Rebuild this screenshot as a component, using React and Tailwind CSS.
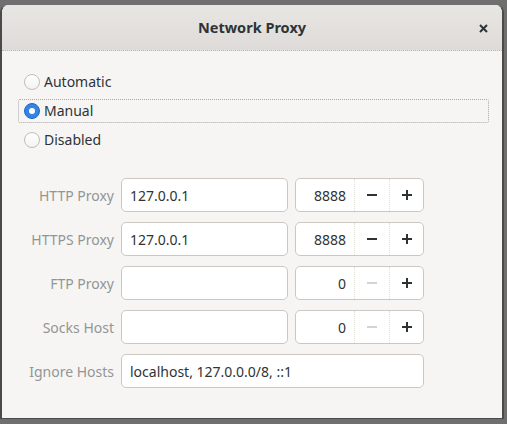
import React from "react";

const font = { fontFamily: '"Noto Sans", "Open Sans", sans-serif' };

function Radio({ label, checked, focused }) {
  return (
    <div
      className={
        "h-[24px] flex items-center pl-[5px] rounded-[2px] border border-dotted " +
        (focused ? "border-[#a8a8a6]" : "border-transparent")
      }
    >
      {checked ? (
        <span className="w-[16px] h-[16px] rounded-full bg-[#3584e4] border border-[#1b6acb] flex items-center justify-center">
          <span className="w-[6px] h-[6px] rounded-full bg-white" />
        </span>
      ) : (
        <span className="w-[16px] h-[16px] rounded-full bg-gradient-to-b from-white to-[#f4f3f2] border border-[#c0bdb9]" />
      )}
      <span className="ml-[4px] text-[14px] text-[#2e3436] leading-none">{label}</span>
    </div>
  );
}

function Entry({ value, className = "" }) {
  return (
    <div
      className={
        "h-[34px] bg-white border border-[#cdc7c2] rounded-[5px] flex items-center pl-[8px] text-[14px] text-[#2e3436] " +
        className
      }
    >
      {value}
    </div>
  );
}

function Spin({ value, minusDisabled }) {
  return (
    <div className="w-[129px] h-[34px] bg-white border border-[#cdc7c2] rounded-[5px] flex items-stretch text-[14px] text-[#2e3436]">
      <div className="w-[58px] flex items-center justify-end pr-[8px]">{value}</div>
      <div className="w-[35px] flex items-center justify-center border-l border-dotted border-[#e2dfdb]">
        <svg width="12" height="12" viewBox="0 0 12 12">
          <path d="M1 6h10" stroke={minusDisabled ? "#d5d3d0" : "#2e3436"} strokeWidth="2" />
        </svg>
      </div>
      <div className="flex-1 flex items-center justify-center border-l border-dotted border-[#e2dfdb]">
        <svg width="12" height="12" viewBox="0 0 12 12">
          <path d="M1 6h10M6 1v10" stroke="#2e3436" strokeWidth="2" />
        </svg>
      </div>
    </div>
  );
}

function Row({ label, children }) {
  return (
    <div className="flex items-center">
      <div className="w-[96px] text-right text-[14px] text-[#929595]">{label}</div>
      <div className="ml-[7px] flex items-center gap-[7px]">{children}</div>
    </div>
  );
}

export default function App() {
  return (
    <div
      className="w-[507px] h-[424px] bg-[#6f6f6f] pt-[5px] pb-[5px] pl-0 pr-[3px] overflow-hidden"
      style={font}
    >
      <div className="h-full flex flex-col bg-[#f6f5f4] border-x-[2px] border-b border-[#4a4a4a] rounded-t-[8px] overflow-hidden">
        <div className="h-[46px] shrink-0 bg-gradient-to-b from-[#e8e6e3] to-[#dedbd8] border-b border-dotted border-[#bfb8b1] flex items-center justify-center relative">
          <span className="text-[14.5px] font-bold text-[#2e3436]">Network Proxy</span>
          <span className="absolute right-[14px] top-[19px]">
            <svg width="9" height="9" viewBox="0 0 9 9">
              <path d="M1 1l7 7M8 1l-7 7" stroke="#2e3436" strokeWidth="2" />
            </svg>
          </span>
        </div>
        <div className="flex-1 pt-[19px] pl-[16px] pr-[13px]">
          <div className="flex flex-col gap-[5px]">
            <Radio label="Automatic" />
            <Radio label="Manual" checked focused />
            <Radio label="Disabled" />
          </div>
          <div className="mt-[26px] flex flex-col gap-[10px]">
            <Row label="HTTP Proxy">
              <Entry value="127.0.0.1" className="w-[167px]" />
              <Spin value="8888" />
            </Row>
            <Row label="HTTPS Proxy">
              <Entry value="127.0.0.1" className="w-[167px]" />
              <Spin value="8888" />
            </Row>
            <Row label="FTP Proxy">
              <Entry value="" className="w-[167px]" />
              <Spin value="0" minusDisabled />
            </Row>
            <Row label="Socks Host">
              <Entry value="" className="w-[167px]" />
              <Spin value="0" minusDisabled />
            </Row>
            <Row label="Ignore Hosts">
              <Entry value="localhost, 127.0.0.0/8, ::1" className="w-[303px]" />
            </Row>
          </div>
        </div>
      </div>
    </div>
  );
}
